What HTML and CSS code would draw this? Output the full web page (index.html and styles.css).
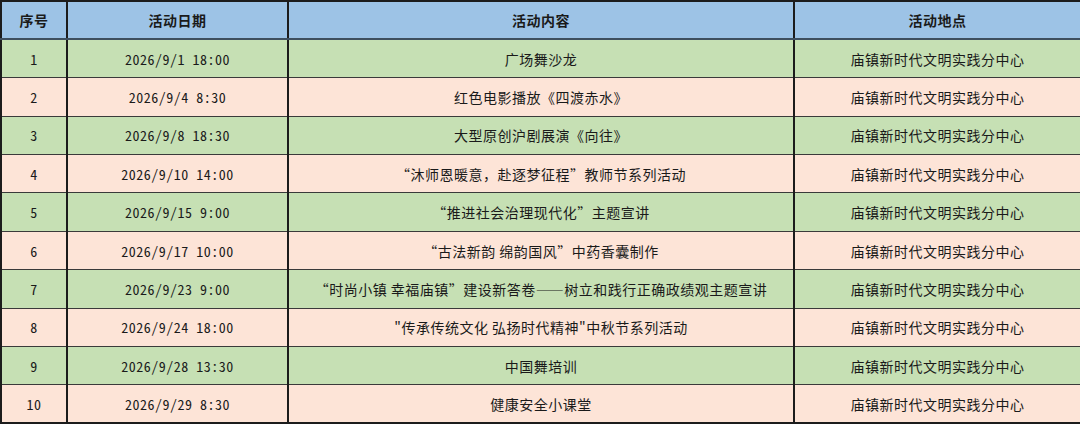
FILE: index.html
```html
<!DOCTYPE html>
<html lang="zh-CN">
<head>
<meta charset="utf-8">
<title>活动安排</title>
<link rel="stylesheet" href="styles.css">
</head>
<body>
<table class="schedule">
  <colgroup>
    <col class="c-no">
    <col class="c-date">
    <col class="c-content">
    <col class="c-place">
  </colgroup>
  <thead>
    <tr>
      <th>序号</th>
      <th>活动日期</th>
      <th>活动内容</th>
      <th>活动地点</th>
    </tr>
  </thead>
  <tbody>
    <tr class="green"><td class="num">1</td><td class="num">2026/9/1 18:00</td><td>广场舞沙龙</td><td>庙镇新时代文明实践分中心</td></tr>
    <tr class="peach"><td class="num">2</td><td class="num">2026/9/4 8:30</td><td>红色电影播放《四渡赤水》</td><td>庙镇新时代文明实践分中心</td></tr>
    <tr class="green"><td class="num">3</td><td class="num">2026/9/8 18:30</td><td>大型原创沪剧展演《向往》</td><td>庙镇新时代文明实践分中心</td></tr>
    <tr class="peach"><td class="num">4</td><td class="num">2026/9/10 14:00</td><td>“沐师恩暖意，赴逐梦征程”教师节系列活动</td><td>庙镇新时代文明实践分中心</td></tr>
    <tr class="green"><td class="num">5</td><td class="num">2026/9/15 9:00</td><td>“推进社会治理现代化”主题宣讲</td><td>庙镇新时代文明实践分中心</td></tr>
    <tr class="peach"><td class="num">6</td><td class="num">2026/9/17 10:00</td><td>“古法新韵 绵韵国风”中药香囊制作</td><td>庙镇新时代文明实践分中心</td></tr>
    <tr class="green"><td class="num">7</td><td class="num">2026/9/23 9:00</td><td>“时尚小镇 幸福庙镇”建设新答卷——树立和践行正确政绩观主题宣讲</td><td>庙镇新时代文明实践分中心</td></tr>
    <tr class="peach"><td class="num">8</td><td class="num">2026/9/24 18:00</td><td>"传承传统文化 弘扬时代精神"中秋节系列活动</td><td>庙镇新时代文明实践分中心</td></tr>
    <tr class="green"><td class="num">9</td><td class="num">2026/9/28 13:30</td><td>中国舞培训</td><td>庙镇新时代文明实践分中心</td></tr>
    <tr class="peach"><td class="num">10</td><td class="num">2026/9/29 8:30</td><td>健康安全小课堂</td><td>庙镇新时代文明实践分中心</td></tr>
  </tbody>
</table>
</body>
</html>
```
FILE: styles.css
```css
html, body {
  margin: 0;
  padding: 0;
  background: #ffffff;
}

.schedule {
  width: 1080px;
  height: 423px;
  table-layout: fixed;
  border-collapse: collapse;
  font-family: "Noto Sans CJK SC", "Noto Sans", sans-serif;
  font-size: 14px;
  color: #1a1a1a;
  border: 2px solid #1c1c1c;
}

.c-no { width: 66px; }
.c-date { width: 221px; }
.c-content { width: 506px; }
.c-place { width: 287px; }

.schedule tr {
  height: 38.4px;
}

.schedule th,
.schedule td {
  padding: 0;
  text-align: center;
  vertical-align: middle;
  white-space: nowrap;
  letter-spacing: 0.5px;
  line-height: 1;
  border-left: 2px solid #1c1c1c;
  border-right: 2px solid #1c1c1c;
}

.schedule th {
  background: #9dc3e6;
  font-weight: 700;
  border-bottom: 2px solid #3e4f5f;
}

.schedule td {
  border-bottom: 1px solid #3a3a3a;
}

.schedule tbody tr:last-child td {
  border-bottom: 2px solid #1c1c1c;
}

.green td {
  background: #c6e0b4;
}

.peach td {
  background: #fde4d7;
}

.num {
  font-feature-settings: "hwid" 1;
  letter-spacing: 0.3px;
}
```
